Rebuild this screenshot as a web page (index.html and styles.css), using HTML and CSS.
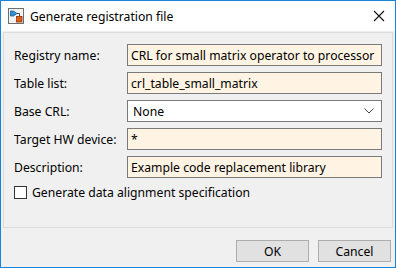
FILE: index.html
```html
<!DOCTYPE html>
<html lang="en">
<head>
    <meta charset="UTF-8">
    <title>Generate registration file</title>
    <link rel="stylesheet" href="styles.css">
</head>
<body>
    <div class="window">
        <div class="titlebar">
            <svg class="app-icon" width="16" height="16" viewBox="0 0 16 16">
                <rect x="0.5" y="0.5" width="15" height="15" fill="#f2f2f2" stroke="#6e6e6e"/>
                <path d="M2.5 3 H5.5 L9 5.5 L5.5 8 H2.5 Z" fill="#2e8fd4" stroke="#1a5f96" stroke-width="0.8"/>
                <path d="M9 5.5 H11.5 V8.5" fill="none" stroke="#444" stroke-width="1"/>
                <rect x="8.5" y="8.5" width="5.5" height="5.5" fill="#e35d16" stroke="#8f3405" stroke-width="0.8"/>
            </svg>
            <span class="title">Generate registration file</span>
            <svg class="close" width="12" height="12" viewBox="0 0 12 12">
                <path d="M1 1 L11 11 M11 1 L1 11" stroke="#111" stroke-width="1.1"/>
            </svg>
        </div>
        <div class="content">
            <div class="panel">
                <div class="row">
                    <label class="label">Registry name:</label>
                    <div class="field">CRL for small matrix operator to processor</div>
                </div>
                <div class="row">
                    <label class="label">Table list:</label>
                    <div class="field">crl_table_small_matrix</div>
                </div>
                <div class="row">
                    <label class="label">Base CRL:</label>
                    <div class="field select">
                        <span>None</span>
                        <svg width="10" height="6" viewBox="0 0 10 6">
                            <path d="M0.5 0.5 L5 5 L9.5 0.5" fill="none" stroke="#444" stroke-width="1"/>
                        </svg>
                    </div>
                </div>
                <div class="row">
                    <label class="label">Target HW device:</label>
                    <div class="field">*</div>
                </div>
                <div class="row">
                    <label class="label">Description:</label>
                    <div class="field">Example code replacement library</div>
                </div>
                <div class="check-row">
                    <span class="checkbox"></span>
                    <span>Generate data alignment specification</span>
                </div>
            </div>
            <div class="buttons">
                <button class="btn">OK</button>
                <button class="btn">Cancel</button>
            </div>
        </div>
    </div>
</body>
</html>
```

FILE: styles.css
```css
body {
    margin: 0;
    font-family: "Noto Sans", "Open Sans", sans-serif;
    font-size: 12.2px;
    color: #000;
}

.window {
    width: 396px;
    height: 268px;
    box-sizing: border-box;
    border: 1px solid #1883d7;
    background-color: #f0f0f0;
    display: flex;
    flex-direction: column;
}

.titlebar {
    height: 30px;
    background-color: #fff;
    display: flex;
    align-items: center;
    padding: 0 0 0 7px;
}

.app-icon {
    margin-top: -1px;
}

.title {
    margin-left: 6px;
    flex: 1;
}

.close {
    margin-right: 10px;
}

.content {
    flex: 1;
    padding: 1px 2px 0 2px;
}

.panel {
    border: 1px solid #dcdcdc;
    height: 196px;
    box-sizing: border-box;
    padding: 11px 9px 0 10px;
}

.row {
    display: flex;
    align-items: center;
    height: 22px;
    margin-bottom: 6px;
}

.label {
    width: 113px;
}

.field {
    width: 255px;
    height: 22px;
    box-sizing: border-box;
    border: 1px solid #7a7a7a;
    background-color: #fff4e3;
    padding: 0 3px;
    display: flex;
    align-items: center;
    white-space: nowrap;
    overflow: hidden;
}

.select {
    background-color: #fff;
    justify-content: space-between;
    padding: 0 7px 0 5px;
}

.check-row {
    display: flex;
    align-items: center;
    margin-top: 4px;
}

.checkbox {
    width: 13px;
    height: 13px;
    box-sizing: border-box;
    border: 1px solid #333;
    background-color: #fff;
    margin-right: 5px;
}

.buttons {
    display: flex;
    justify-content: flex-end;
    gap: 9px;
    padding: 12px 2px 0 0;
}

.btn {
    width: 73px;
    height: 22px;
    border: 1px solid #adadad;
    background-color: #e1e1e1;
    font-family: "Noto Sans", "Open Sans", sans-serif;
    font-size: 12.2px;
    padding: 0;
}
```
